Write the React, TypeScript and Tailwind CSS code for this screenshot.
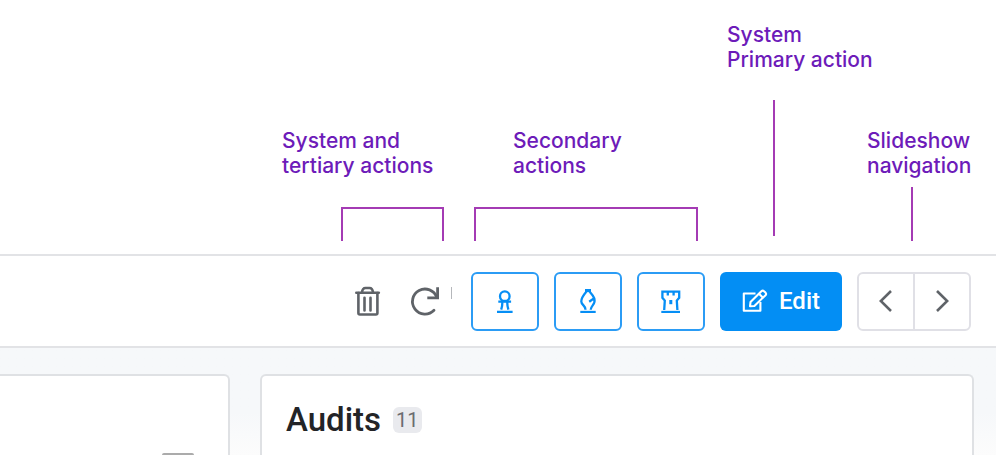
import React from 'react';

interface CalloutProps {
  lines: string[];
  className?: string;
  labelClass?: string;
  children: React.ReactNode;
}

const Callout: React.FC<CalloutProps> = ({ lines, className = '', labelClass = '', children }) => (
  <div className={`shrink-0 ${className}`}>
    <p className={`whitespace-nowrap text-[21px] leading-[25px] font-medium text-[#6d1bb9] ${labelClass}`}>
      {lines.map((line) => (
        <span key={line} className="block">{line}</span>
      ))}
    </p>
    {children}
  </div>
);

const TrashIcon = () => (
  <svg width="26" height="30" viewBox="0 0 26 30" fill="none" stroke="currentColor" strokeWidth="2.6" strokeLinecap="round" strokeLinejoin="round">
    <path d="M1.3 6.8H23.8" />
    <path d="M7 6.5C7.3 3.5 8.5 2 10.5 2h4c2 0 3.2 1.5 3.5 4.5" />
    <path d="M3.4 7v20q0 1.5 1.5 1.5h16q1.5 0 1.5-1.5V7" />
    <path d="M9.5 11.8v12.6M15.5 11.8v12.6" />
  </svg>
);

const RedoIcon = () => (
  <svg width="32" height="30" viewBox="0 0 32 30" fill="none" stroke="currentColor" strokeWidth="2.8">
    <path d="M24 24.2A12.5 12.5 0 1 1 26.8 11.5" strokeLinecap="round" />
    <path d="M27.6 1.2v10.6H17.3" />
  </svg>
);

const PawnIcon = () => (
  <svg width="24" height="24" viewBox="0 0 24 24" fill="none" stroke="currentColor" strokeWidth="2.3">
    <circle cx="11.8" cy="7.2" r="4.8" />
    <path d="M5.3 12.6h12.8M9.4 12.7q0 4-1.2 8M14.2 12.7q0 4 1.2 8M4 23h15.6" />
  </svg>
);

const BishopIcon = () => (
  <svg width="24" height="24" viewBox="0 0 24 24" fill="none" stroke="currentColor" strokeWidth="2.3">
    <path d="M9 1.6h6" strokeWidth="3.2" />
    <path d="M10.3 2.8C8 5.5 5.3 9 5.3 12.5c0 3.4 4.4 4 4.2 8.2" />
    <path d="M13.7 2.8c1.8 2 3.5 4.1 4.5 6.4L13.2 12.8M18.1 9.2c2.4 6-3.2 7-3.4 11.5" />
    <path d="M4.3 23h15.4" />
  </svg>
);

const RookIcon = () => (
  <svg width="24" height="24" viewBox="0 0 24 24" fill="none" stroke="currentColor" strokeWidth="2.3">
    <path d="M5.2 21l.6-9.4-2.4-2.8V2.6h16.8v6.2l-2.4 2.8.6 9.4" />
    <path d="M8.8 2.4v4.2M14.6 2.4v4.2" />
    <path d="M11.8 11v4.2" strokeWidth="3" />
    <path d="M2.3 23H21" />
  </svg>
);

const EditIcon = () => (
  <svg width="26" height="24" viewBox="0 0 26 24" fill="none" stroke="currentColor" strokeWidth="2.1" strokeLinejoin="round">
    <path d="M13.5 4.5H1.8v17.2h16.6V13" />
    <path d="M8 17.3l.5-4.2L19.4 2.2q1.3-1.2 2.6 0l1.5 1.4q1.2 1.3 0 2.6L12.4 17z" />
    <path d="M17 4.8l3.8 3.8" />
  </svg>
);

const Chevron = ({ d }: { d: string }) => (
  <svg width="14" height="24" viewBox="0 0 14 24" fill="none" stroke="currentColor" strokeWidth="2.6">
    <path d={d} />
  </svg>
);

const pieces = [
  { name: 'Pawn', Icon: PawnIcon },
  { name: 'Bishop', Icon: BishopIcon },
  { name: 'Rook', Icon: RookIcon },
];

const Annotations = () => (
  <div className="flex h-[241px] shrink-0 items-end justify-end font-[Inter,sans-serif]">
    <Callout lines={['System and', 'tertiary actions']} className="w-[192px]">
      <div className="mt-[29px] ml-[59px] h-[34px] w-[103px] border-2 border-b-0 border-[#a43bb4]" />
    </Callout>
    <Callout lines={['Secondary', 'actions']} className="w-[253px]" labelClass="pl-[39px]">
      <div className="mt-[29px] h-[34px] w-[224px] border-2 border-b-0 border-[#a43bb4]" />
    </Callout>
    <Callout lines={['System', 'Primary action']} className="w-[140px] pb-[5px]">
      <div className="mt-7 ml-[46px] h-[136px] w-0 border-l-2 border-[#a43bb4]" />
    </Callout>
    <Callout lines={['Slideshow', 'navigation']} className="w-[129px]">
      <div className="mt-[9px] ml-[44px] h-[54px] w-0 border-l-2 border-[#a43bb4]" />
    </Callout>
  </div>
);

const Toolbar = () => (
  <header className="mt-[13px] flex h-[94px] shrink-0 items-center justify-end gap-[15px] border-y-2 border-[#e2e3e6] pr-[25px] text-[#5f6368]">
    <div className="flex items-center">
      <button aria-label="Delete" className="mr-[29px]"><TrashIcon /></button>
      <button aria-label="Reload"><RedoIcon /></button>
      <span className="mr-1 ml-[9px] mb-4 h-3 w-px bg-[#b5b7bb]" />
    </div>
    {pieces.map(({ name, Icon }) => (
      <button
        key={name}
        aria-label={name}
        className="flex h-[59px] w-[68px] items-center justify-center rounded-md border-2 border-[#2b9cf5] text-[#058ef5]"
      >
        <Icon />
      </button>
    ))}
    <button className="flex h-[59px] w-[122px] items-center justify-center gap-[11px] rounded-md bg-[#038ef4] text-2xl font-medium text-white">
      <EditIcon />
      Edit
    </button>
    <nav className="flex h-[59px] w-[114px] divide-x-2 divide-[#e0e0e6] rounded-md border-2 border-[#e0e0e6]">
      <button aria-label="Previous slide" className="flex flex-1 items-center justify-center">
        <Chevron d="M12 2L1.8 12L12 22" />
      </button>
      <button aria-label="Next slide" className="flex flex-1 items-center justify-center">
        <Chevron d="M2 2l10.2 10L2 22" />
      </button>
    </nav>
  </header>
);

export default function App() {
  return (
    <div className="flex h-screen flex-col overflow-hidden bg-white pr-[3px] font-[Roboto,sans-serif]">
      <Annotations />
      <Toolbar />
      <main className="flex min-h-0 flex-1 gap-[30px] bg-linear-to-b from-[#f6f8fa] from-60% to-[#fcfcfc] pt-[26px] pr-[22px]">
        <section className="flex w-[230px] shrink-0 items-end justify-end rounded-tr-md border-t-2 border-r-2 border-[#dfe1e4] bg-white pr-[34px]">
          <div className="h-0.5 w-8 rounded-t-sm bg-[#ababab]" />
        </section>
        <section className="flex-1 rounded-t-md border-2 border-b-0 border-[#dfe1e4] bg-white px-6 pt-6">
          <div className="flex items-center gap-3">
            <h2 className="text-[33px] leading-10 font-medium text-[#232427]">Audits</h2>
            <span className="rounded-md bg-[#e9eaee] px-[3px] text-[20px] leading-[26px] text-[#6b6c70]">11</span>
          </div>
        </section>
      </main>
    </div>
  );
}
